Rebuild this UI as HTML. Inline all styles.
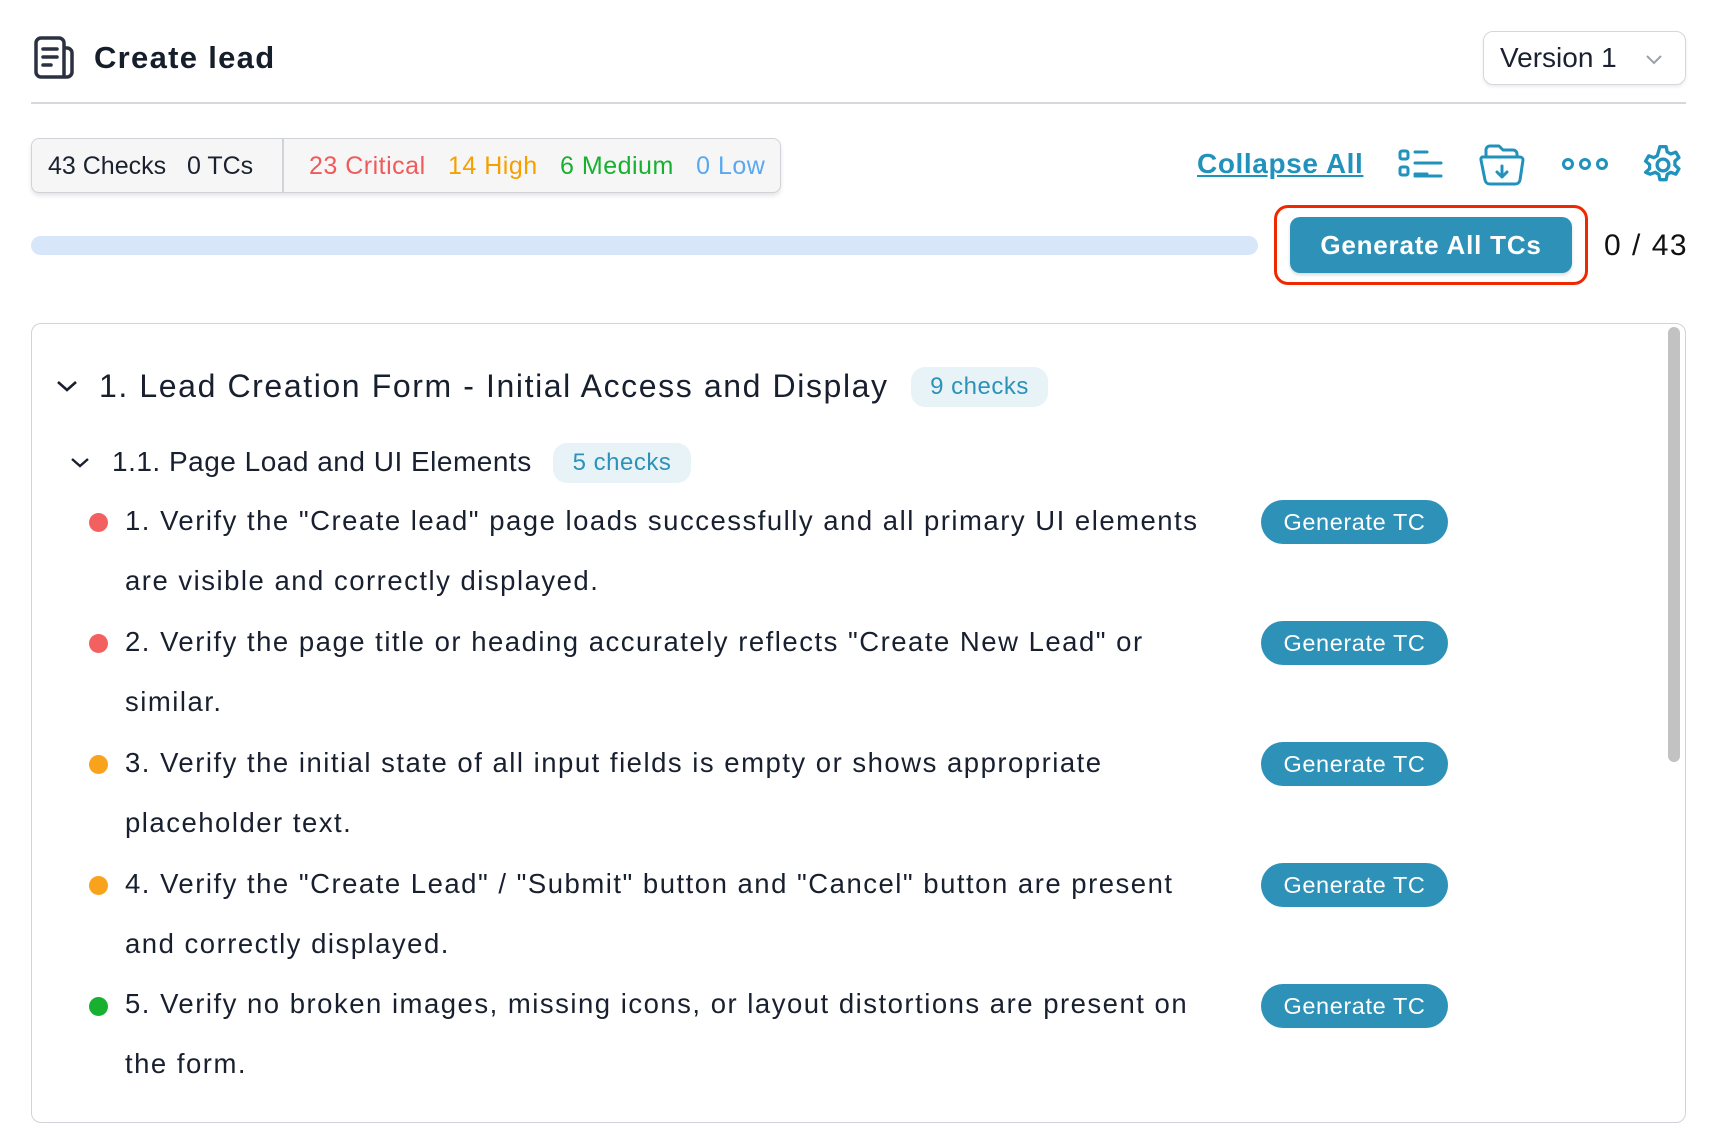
<!DOCTYPE html>
<html><head><meta charset="utf-8"><style>
*{margin:0;padding:0;box-sizing:border-box}
body{width:1714px;height:1104px;overflow:hidden;background:#fff;font-family:"Liberation Sans",sans-serif;color:#18202f;position:relative}
.a{position:absolute;white-space:nowrap}
.btn{position:absolute;background:#2e92b8;color:#fff;border-radius:22px;font-size:23.5px;letter-spacing:0.6px;display:flex;align-items:center;justify-content:center;width:187px;height:44px;left:1261px}
.dot{position:absolute;width:19px;height:19px;border-radius:50%;left:89px}
.t{position:absolute;left:125px;font-size:27.5px;letter-spacing:1.5px;white-space:nowrap;line-height:30px}
.badge{position:absolute;background:#e8f3f8;color:#2e92b8;border-radius:14px;display:flex;align-items:center;justify-content:center;letter-spacing:0.5px}
</style></head><body>
<svg class="a" style="left:31px;top:35px" width="46" height="46" viewBox="0 0 46 46" fill="none" stroke="#2a3140" stroke-width="3.5" stroke-linecap="round" stroke-linejoin="round">
<path d="M33 13h3a5 5 0 0 1 5 5v19a5 5 0 0 1-5 5H10a5 5 0 0 1-5-5V8a5 5 0 0 1 5-5h18a5 5 0 0 1 5 5v34"/>
<path d="M12 14h14M12 22h14M12 30h8"/>
</svg>
<div class="a" style="left:94px;top:40px;font-size:31px;letter-spacing:1.3px;font-weight:bold;color:#161d2b">Create lead</div>
<div class="a" style="left:1483px;top:31px;width:203px;height:54px;border:1.5px solid #d4d7dc;border-radius:10px;box-shadow:0 2px 3px rgba(0,0,0,.08)"></div>
<div class="a" style="left:1500px;top:42px;font-size:28px;color:#1b2130">Version 1</div>
<svg class="a" style="left:1644px;top:52px" width="20" height="14" viewBox="0 0 20 14" fill="none" stroke="#9aa0a8" stroke-width="2"><path d="M3 4l7 7 7-7"/></svg>
<div class="a" style="left:31px;top:102px;width:1655px;height:2px;background:#d5d8dc"></div>

<div class="a" style="left:31px;top:138px;width:750px;height:55px;border:1.5px solid #d0d3d8;border-radius:8px;background:#f6f6f6;box-shadow:0 3px 4px rgba(0,0,0,.1)"></div>
<div class="a" style="left:282px;top:139px;width:1.5px;height:53px;background:#d0d3d8"></div>
<div class="a" style="left:48px;top:152px;font-size:25px;color:#1b2130">43 Checks&nbsp;&nbsp; 0 TCs</div>
<div class="a" style="left:309px;top:152px;font-size:25px;letter-spacing:0.5px"><span style="color:#f05a5a">23 Critical</span>&nbsp;&nbsp; <span style="color:#f5a000">14 High</span>&nbsp;&nbsp; <span style="color:#18b030">6 Medium</span>&nbsp;&nbsp; <span style="color:#5aa8f0">0 Low</span></div>

<div class="a" style="left:1197px;top:148px;font-size:28px;letter-spacing:0.6px;font-weight:bold;color:#2192bc;text-decoration:underline">Collapse All</div>
<svg class="a" style="left:1397px;top:144px" width="48" height="40" viewBox="0 0 48 40" fill="none" stroke="#2192bc" stroke-width="3" stroke-linecap="round"><rect x="3" y="7" width="8" height="8" rx="2"/><rect x="3" y="23" width="8" height="8" rx="2"/><path d="M18 8h12M18 19h26M18 30h12"/><path d="M18 32h26"/></svg>
<svg class="a" style="left:1478px;top:141px" width="50" height="48" viewBox="0 0 50 48" fill="none" stroke="#2192bc" stroke-width="3" stroke-linecap="round" stroke-linejoin="round"><path d="M8 16V9a4 4 0 0 1 4-4h9l4 4h10a4 4 0 0 1 4 4v3"/><path d="M4 16h38a3 3 0 0 1 3 3l-3 20a5 5 0 0 1-5 4H12a5 5 0 0 1-5-4L3 19a3 3 0 0 1 1-3z"/><path d="M24 25v10M19 31l5 5 5-5"/></svg>
<svg class="a" style="left:1561px;top:156px" width="48" height="16" viewBox="0 0 48 16" fill="none" stroke="#2192bc" stroke-width="3"><circle cx="7" cy="8" r="4.5"/><circle cx="24" cy="8" r="4.5"/><circle cx="41" cy="8" r="4.5"/></svg>
<svg class="a" style="left:1641px;top:143px" width="44" height="44" viewBox="0 0 24 24" fill="none" stroke="#2192bc" stroke-width="1.8" stroke-linejoin="round"><path d="M10.3 2h3.4l.6 2.9 1.9 1.1 2.8-1 1.7 2.9-2.2 2v2.2l2.2 2-1.7 2.9-2.8-1-1.9 1.1-.6 2.9h-3.4l-.6-2.9-1.9-1.1-2.8 1L2.5 16l2.2-2v-2.2L2.5 9.9 4.2 7l2.8 1 1.9-1.1z"/><circle cx="12" cy="12" r="3.2"/></svg>

<div class="a" style="left:31px;top:236px;width:1227px;height:19px;background:#d8e6fa;border-radius:10px"></div>
<div class="a" style="left:1274px;top:205px;width:314px;height:80px;border:3.5px solid #f02800;border-radius:14px"></div>
<div class="a" style="left:1290px;top:217px;width:282px;height:56px;background:#2e92b8;border-radius:10px;color:#fff;font-size:26px;letter-spacing:0.8px;font-weight:bold;display:flex;align-items:center;justify-content:center;box-shadow:0 2px 3px rgba(0,0,0,.15)">Generate All TCs</div>
<div class="a" style="left:1604px;top:229px;font-size:30px;letter-spacing:1.5px;color:#111">0 / 43</div>

<div class="a" style="left:31px;top:323px;width:1655px;height:800px;border:1.5px solid #d0d3d8;border-radius:10px"></div>
<div class="a" style="left:1668px;top:327px;width:12px;height:435px;background:#c2c2c2;border-radius:6px"></div>

<svg class="a" style="left:55px;top:378px" width="24" height="16" viewBox="0 0 24 16" fill="none" stroke="#18202f" stroke-width="2.6"><path d="M3 4l9 8 9-8"/></svg>
<div class="a" style="left:99px;top:368px;font-size:32px;letter-spacing:1.6px;color:#18202f">1. Lead Creation Form - Initial Access and Display</div>
<div class="badge" style="left:911px;top:367px;width:137px;height:40px;font-size:24px">9 checks</div>

<svg class="a" style="left:69px;top:455px" width="22" height="15" viewBox="0 0 22 15" fill="none" stroke="#18202f" stroke-width="2.4"><path d="M3 4l8 7 8-7"/></svg>
<div class="a" style="left:112px;top:446px;font-size:28px;letter-spacing:0.5px;color:#18202f">1.1. Page Load and UI Elements</div>
<div class="badge" style="left:553px;top:443px;width:138px;height:40px;font-size:24px">5 checks</div>

<div class="dot" style="top:513px;background:#f26060"></div>
<div class="t" style="top:506px">1. Verify the "Create lead" page loads successfully and all primary UI elements</div>
<div class="t" style="top:566px">are visible and correctly displayed.</div>
<div class="btn" style="top:500px">Generate TC</div>

<div class="dot" style="top:634px;background:#f26060"></div>
<div class="t" style="top:627px">2. Verify the page title or heading accurately reflects "Create New Lead" or</div>
<div class="t" style="top:687px">similar.</div>
<div class="btn" style="top:621px">Generate TC</div>

<div class="dot" style="top:755px;background:#f9a21b"></div>
<div class="t" style="top:748px">3. Verify the initial state of all input fields is empty or shows appropriate</div>
<div class="t" style="top:808px">placeholder text.</div>
<div class="btn" style="top:742px">Generate TC</div>

<div class="dot" style="top:876px;background:#f9a21b"></div>
<div class="t" style="top:869px">4. Verify the "Create Lead" / "Submit" button and "Cancel" button are present</div>
<div class="t" style="top:929px">and correctly displayed.</div>
<div class="btn" style="top:863px">Generate TC</div>

<div class="dot" style="top:997px;background:#18b030"></div>
<div class="t" style="top:989px">5. Verify no broken images, missing icons, or layout distortions are present on</div>
<div class="t" style="top:1049px">the form.</div>
<div class="btn" style="top:984px">Generate TC</div>
</body></html>
